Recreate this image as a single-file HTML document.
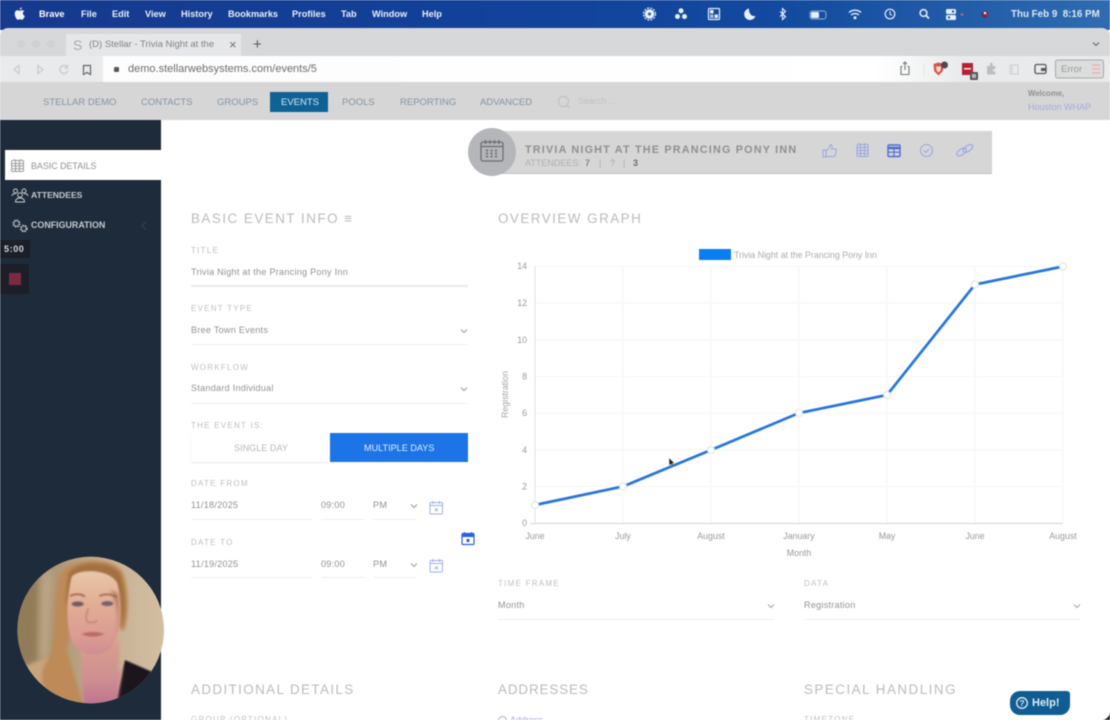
<!DOCTYPE html>
<html><head><meta charset="utf-8"><title>Stellar</title>
<style>
html,body{margin:0;padding:0;width:1110px;height:720px;overflow:hidden;background:#fff}
body{font-family:"Liberation Sans",sans-serif;position:relative}
#w{position:absolute;left:0;top:0;width:1110px;height:720px;overflow:hidden;filter:blur(.5px)}
.a{position:absolute;white-space:nowrap}
.m{top:8px;line-height:13px;font-size:9.2px;font-weight:bold;color:#eaf0fa;position:absolute;white-space:nowrap}
.n{top:96px;line-height:13px;font-size:9.5px;color:#8593a1;position:absolute;white-space:nowrap}
.h{font-size:13.4px;letter-spacing:1.5px;color:#b9bbbe;line-height:18px;position:absolute;white-space:nowrap}
.l{font-size:8px;letter-spacing:1.25px;color:#bcbec0;line-height:11px;position:absolute;white-space:nowrap}
.v{font-size:9.1px;letter-spacing:.25px;color:#8f9296;line-height:12px;position:absolute;white-space:nowrap}
.u{position:absolute;height:1px;background:#eeeff0}
.mi{position:absolute}
</style></head><body><div id="w">

<!-- menu bar -->
<div class="a" style="left:0;top:0;width:1110px;height:30px;background:linear-gradient(90deg,#163a8e 0,#12429b 45%,#124a9f 70%,#2f6cb0 100%)"></div>
<svg class="mi" style="left:14px;top:7px" width="12" height="14" viewBox="0 0 12 14"><path d="M8.200 3.200c-1.100 0-1.600.6-2.400.6s-1.300-.6-2.300-.6C2 3.200.8 4.500.8 6.700c0 2.700 1.800 6 3.200 6 .8 0 1.100-.5 2-.5s1.100.5 2 .5c1.200 0 2.300-2.200 2.800-3.700-1.200-.5-1.900-1.500-1.900-2.700 0-1.100.6-1.900 1.500-2.400-.5-.4-1.200-.7-2.200-.7zM6 3c.9-.2 1.900-1.300 1.800-2.700C6.700.5 5.700 1.600 6 3z" fill="#f0f2f8"/></svg>
<span class="m" style="left:39px;color:#fff">Brave</span>
<span class="m" style="left:81px">File</span>
<span class="m" style="left:112px">Edit</span>
<span class="m" style="left:145px">View</span>
<span class="m" style="left:181px">History</span>
<span class="m" style="left:228px">Bookmarks</span>
<span class="m" style="left:292px">Profiles</span>
<span class="m" style="left:341px">Tab</span>
<span class="m" style="left:372px">Window</span>
<span class="m" style="left:422px">Help</span>
<svg class="mi" style="left:640px;top:5px" width="350" height="18" viewBox="0 0 350 18" fill="#e8eef8">
<circle cx="9.500" cy="9" r="4.800"/><circle cx="9.500" cy="9" r="6" fill="none" stroke="#e8eef8" stroke-width="1.200" stroke-dasharray="2 1.200"/><circle cx="9.500" cy="9" r="1.500" fill="#2a5aa5"/>
<circle cx="41" cy="5.800" r="2.500"/><circle cx="37.500" cy="11.500" r="2.500"/><circle cx="44.500" cy="11.500" r="2.500"/>
<rect x="68.500" y="3.500" width="11" height="11" rx="1" fill="none" stroke="#e8eef8" stroke-width="1.200"/><rect x="70" y="5" width="3.500" height="3.500"/><rect x="74.500" y="9.500" width="3.500" height="3.500"/><rect x="70" y="9.500" width="3.500" height="3.500" opacity=".7"/>
<path d="M109 3.500a5.800 5.800 0 1 0 6.500 7.500c-3.500 1-7-2.500-6.500-7.500z"/>
<path d="M142.500 3.500l3 2.700-3 2.800 3 2.800-3 2.700zM140 6.500l5.500 5M140 11.500l5.500-5" fill="none" stroke="#e8eef8" stroke-width="1.100"/>
<rect x="170" y="6" width="16" height="8" rx="2.500" fill="none" stroke="#8fb0d8" stroke-width="1"/><rect x="171" y="7" width="8" height="6" rx="1"/>
<path d="M209 7.500a9 9 0 0 1 12 0M211.200 10a5.800 5.800 0 0 1 7.600 0" fill="none" stroke="#e8eef8" stroke-width="1.400"/><circle cx="215" cy="12.800" r="1.500"/>
<circle cx="250" cy="9" r="4.800" fill="none" stroke="#e8eef8" stroke-width="1.200"/><path d="M250 6v3.300l2 1" fill="none" stroke="#e8eef8" stroke-width="1"/>
<circle cx="283.500" cy="8" r="3.400" fill="none" stroke="#e8eef8" stroke-width="1.500"/><path d="M286 10.500l3 3" stroke="#e8eef8" stroke-width="1.700"/>
<rect x="306" y="4" width="10" height="5" rx="1.500"/><rect x="306" y="10" width="10" height="5" rx="1.500"/><circle cx="313" cy="6.500" r="1.200" fill="#2a5aa5"/><circle cx="309" cy="12.500" r="1.200" fill="#2a5aa5"/><circle cx="322" cy="9.500" r="1.300" fill="#c06a7c"/>
<circle cx="345" cy="9.500" r="3.500" fill="#6b2b55"/><circle cx="345" cy="8" r="1.300" fill="#e9eef0"/><circle cx="347" cy="10" r="1.100" fill="#b03040"/>
</svg>
<span class="a" style="left:1011px;top:8px;line-height:13px;font-size:9.8px;color:#dfe7f3;font-weight:bold">Thu Feb 9&nbsp; 8:16 PM</span>

<!-- browser chrome -->
<div class="a" style="left:0;top:28px;width:1110px;height:29px;background:#d6d8d9;border-radius:8px 8px 0 0"></div>
<div class="a" style="left:17px;top:40px;width:8px;height:8px;border-radius:50%;background:#cfd1d2;box-shadow:15px 0 0 #cfd1d2,30px 0 0 #cfd1d2"></div>
<div class="a" style="left:66px;top:34px;width:175px;height:22px;background:#e6e7e8"></div>
<span class="a" style="left:73px;top:37px;font-size:14px;color:#a8abaf;line-height:16px">S</span>
<span class="a" style="left:89px;top:39px;font-size:9.5px;color:#808488;line-height:12px">(D) Stellar - Trivia Night at the</span>
<span class="a" style="left:229px;top:38px;font-size:13px;color:#6f7276;line-height:14px">×</span>
<span class="a" style="left:253px;top:37px;font-size:15px;color:#55585c;line-height:15px">+</span>
<svg class="mi" style="left:1091px;top:41px" width="10" height="7"><path d="M2 1.500l3 3 3-3" fill="none" stroke="#77797c" stroke-width="1.300"/></svg>

<div class="a" style="left:0;top:56px;width:1110px;height:26px;background:#e9eaeb"></div>
<div class="a" style="left:103px;top:56px;width:860px;height:26px;background:linear-gradient(90deg,#fdfdfd,#fff 90%,#e9eaeb)"></div>
<svg class="mi" style="left:8px;top:61px" width="90" height="17" viewBox="0 0 90 17" fill="none" stroke="#c3c5c7" stroke-width="1.100">
<path d="M11 4.500l-5 4 5 4z"/><path d="M30 4.500l5 4-5 4z"/>
<path d="M59 6a4 4 0 1 0 .8 3.500M59.500 4v3h-3"/>
<path d="M75.500 4.500h7v9l-3.500-2-3.500 2z" stroke="#64676b" stroke-width="1.200"/></svg>
<div class="a" style="left:114px;top:67px;width:5px;height:5px;background:#55585c;border-radius:1px"></div>
<span class="a" style="left:128px;top:63px;font-size:11px;color:#6a6d70;line-height:13px">demo.stellarwebsystems.com/events/5</span>
<svg class="mi" style="left:898px;top:59px" width="212" height="21" viewBox="0 0 212 21">
<path d="M4.500 7.500h-1.500v8h8v-8h-1.500M7 11v-8M5 5l2-2 2 2" fill="none" stroke="#76797c" stroke-width="1.100"/>
<path d="M26 5v12" stroke="#e4e5e6"/>
<path d="M35.500 5l5-1.500 5 1.500-.6 7-4.400 4.500-4.400-4.500z" fill="#d9534a"/><path d="M38 7.500h5l-.6 4-1.900 2-1.900-2z" fill="#fbe3dd"/><circle cx="46.500" cy="6" r="3.500" fill="#4a4c50"/>
<rect x="64" y="4" width="11" height="12" fill="#b81f35"/><rect x="66" y="9" width="7" height="1.500" fill="#eee"/><rect x="72" y="13" width="8" height="8" rx="1" fill="#55585b"/><rect x="74" y="15" width="4" height="4" fill="#b4b6b8"/>
<path d="M89 7h3v-2a1.300 1.300 0 0 1 2.600 0v2h2.800v3h-1.500a1.300 1.300 0 0 0 0 2.500h1.500v3h-8.400z" fill="#bcbec0"/>
<rect x="112" y="6" width="8" height="9" fill="none" stroke="#c9cbcd" stroke-width="1"/><rect x="112" y="6" width="3" height="9" fill="#d8dadb"/>
<rect x="137" y="5.500" width="11" height="9" rx="1.500" fill="none" stroke="#55585c" stroke-width="1.300"/><rect x="143" y="9" width="5" height="3" fill="#55585c"/>
<rect x="157.500" y="1" width="48" height="18" rx="2" fill="#dcdddd" stroke="#a6a9ab" stroke-width="1"/>
<path d="M194 6h8M194 10h8M194 14h8" stroke="#ecb2a8" stroke-width="1.400"/></svg>
<span class="a" style="left:1061px;top:63px;font-size:9.5px;color:#96999c;line-height:13px">Error</span>

<!-- app nav -->
<div class="a" style="left:0;top:82px;width:1110px;height:38px;background:#d6d6d6"></div>
<span class="n" style="left:43px">STELLAR DEMO</span>
<span class="n" style="left:141px">CONTACTS</span>
<span class="n" style="left:217px">GROUPS</span>
<div class="a" style="left:270px;top:92px;width:58px;height:20px;background:#0f6296"></div>
<span class="n" style="left:281px;color:#d8e6f0">EVENTS</span>
<span class="n" style="left:342px">POOLS</span>
<span class="n" style="left:400px">REPORTING</span>
<span class="n" style="left:480px">ADVANCED</span>
<svg class="mi" style="left:556px;top:94px" width="16" height="16"><circle cx="7.500" cy="7.500" r="5" fill="none" stroke="#c0c2c4" stroke-width="1.200"/><path d="M11 11l3 3" stroke="#c0c2c4" stroke-width="1.200"/></svg>
<span class="a" style="left:578px;top:95px;font-size:9px;color:#c0c1c3;line-height:12px">Search ...</span>
<span class="a" style="left:1028px;top:88px;font-size:7.8px;font-weight:bold;color:#8f9092;line-height:11px">Welcome,</span>
<span class="a" style="left:1028px;top:102px;font-size:9px;color:#a6aade;line-height:11px">Houston WHAP</span>

<!-- sidebar -->
<div class="a" style="left:0;top:120px;width:161px;height:600px;background:#1e2b3a"></div>
<div class="a" style="left:5px;top:150px;width:156px;height:30px;background:#fff"></div>
<svg class="mi" style="left:10px;top:158px" width="15" height="15" viewBox="0 0 15 15" fill="none" stroke="#9a9c9f" stroke-width="1"><rect x="1.500" y="2.500" width="12" height="11" rx="1"/><path d="M1.500 5.500h12M1.500 8h12M1.500 10.800h12M5.500 2.500v11M9.500 2.500v11M4.500 1v2M10.500 1v2"/></svg>
<span class="a" style="left:31px;top:160px;font-size:8.9px;color:#8e9093;line-height:13px">BASIC DETAILS</span>
<svg class="mi" style="left:11px;top:187px" width="18" height="16" viewBox="0 0 18 16" fill="none" stroke="#c5cad0" stroke-width="1"><circle cx="4.500" cy="4" r="2"/><circle cx="13" cy="4" r="2"/><circle cx="9" cy="8" r="2.300"/><path d="M1 9c0-2 2-2.500 4-2.500M16.800 9c0-2-2-2.500-4-2.500M4.500 15c0-3 2-4 4.500-4s4.500 1 4.500 4z"/></svg>
<span class="a" style="left:31px;top:189px;font-size:8.6px;font-weight:bold;color:#c4c9cf;line-height:13px">ATTENDEES</span>
<svg class="mi" style="left:11px;top:218px" width="18" height="16" viewBox="0 0 18 16" fill="none" stroke="#c5cad0"><circle cx="5.500" cy="5.500" r="3" stroke-width="2" stroke-dasharray="1.500 .8"/><circle cx="12.800" cy="10.500" r="2.800" stroke-width="2" stroke-dasharray="1.500 .8"/></svg>
<span class="a" style="left:31px;top:219px;font-size:8.9px;font-weight:bold;color:#c4c9cf;line-height:13px">CONFIGURATION</span>
<svg class="mi" style="left:140px;top:220px" width="8" height="11"><path d="M6 1.500L2 5.500l4 4" fill="none" stroke="#33424f" stroke-width="1.200"/></svg>
<div class="a" style="left:0;top:240px;width:30px;height:18px;background:#1a1f29"></div>
<span class="a" style="left:4px;top:243px;font-size:9px;font-weight:bold;letter-spacing:.6px;color:#d5d6d8;line-height:12px">5:00</span>
<div class="a" style="left:0;top:264px;width:29px;height:30px;background:#1c1f27"></div>
<div class="a" style="left:9px;top:273px;width:12px;height:12px;background:#7c2a40"></div>

<!-- header strip -->
<div class="a" style="left:490px;top:131px;width:502px;height:43px;background:#d6d6d6;border-bottom:1px solid #bfc0c2;box-sizing:border-box"></div>
<div class="a" style="left:468px;top:128px;width:48px;height:48px;border-radius:50%;background:#b5b6b9"></div>
<svg class="mi" style="left:479px;top:138px" width="26" height="26" viewBox="0 0 26 26" fill="none" stroke="#696c70" stroke-width="1.200"><rect x="2" y="4" width="22" height="19" rx="2"/><path d="M2 8.500h22M6.500 2v4M11 2v4M15.500 2v4M20 2v4"/><path d="M7 12.500h12M7 15.500h12M7 18.500h12" stroke-width="1.800" stroke-dasharray="2 2.500"/></svg>
<span class="a" style="left:525px;top:143px;font-size:10.8px;font-weight:bold;letter-spacing:1.2px;color:#8e9094;line-height:14px">TRIVIA NIGHT AT THE PRANCING PONY INN</span>
<span class="a" style="left:525px;top:157px;font-size:9px;color:#aeb0b3;line-height:12px">ATTENDEES:</span>
<span class="a" style="left:585px;top:157px;font-size:9px;color:#85888b;line-height:12px;font-weight:bold">7</span>
<span class="a" style="left:599px;top:157px;font-size:9px;color:#a8aaad;line-height:12px">|</span>
<span class="a" style="left:610px;top:157px;font-size:9px;color:#a0a3a6;line-height:12px">?</span>
<span class="a" style="left:623px;top:157px;font-size:9px;color:#a8aaad;line-height:12px">|</span>
<span class="a" style="left:633px;top:157px;font-size:9px;color:#6b6e72;line-height:12px;font-weight:bold">3</span>
<svg class="mi" style="left:820px;top:141px" width="160" height="20" viewBox="0 0 160 20" fill="none" stroke="#98a6e2" stroke-width="1">
<path d="M3 9h3v7H3zM6.500 9.500c2-1 3-3 4-6 1.500 0 2 1.500 1.200 4.500h3.800c1 0 1 1 .7 2l-1.200 4.500c-.2.800-.8 1-1.500 1H6.500"/>
<rect x="37" y="3.500" width="11" height="12" rx="1"/><path d="M37 6.500h11M37 9.500h11M37 12.500h11M40.500 3.500v12M44.500 3.500v12M39.500 2v2M45.500 2v2"/>
<rect x="68" y="4" width="12" height="11.500" rx="1" stroke="#4a6ed8" stroke-width="1.400"/><path d="M68 7h12" stroke="#4a6ed8" stroke-width="2.500"/><path d="M68 11.200h12M74 7v8.500" stroke="#4a6ed8" stroke-width="1.100"/>
<circle cx="106.500" cy="9.500" r="6"/><path d="M103.800 9.500l2 2 3.500-3.500"/>
<g stroke-width="1.100"><ellipse cx="141.500" cy="11" rx="5.500" ry="2.800" transform="rotate(-35 141.500 11)"/><ellipse cx="148" cy="7.500" rx="5.500" ry="2.800" transform="rotate(-35 148 7.500)"/></g>
</svg>

<!-- basic event info -->
<span class="h" style="left:191px;top:210px">BASIC EVENT INFO ≡</span>
<span class="l" style="left:191px;top:245px">TITLE</span>
<span class="v" style="left:191px;top:266px">Trivia Night at the Prancing Pony Inn</span>
<div class="u" style="left:191px;top:285px;width:277px;height:2px;background:#e8e9ea"></div>
<span class="l" style="left:191px;top:303px">EVENT TYPE</span>
<span class="v" style="left:191px;top:324px">Bree Town Events</span>
<svg class="mi" style="left:460px;top:328px" width="8" height="6"><path d="M1 1.500l3 3 3-3" fill="none" stroke="#9a9da0" stroke-width="1"/></svg>
<div class="u" style="left:191px;top:344px;width:277px"></div>
<span class="l" style="left:191px;top:362px">WORKFLOW</span>
<span class="v" style="left:191px;top:382px">Standard Individual</span>
<svg class="mi" style="left:460px;top:386px" width="8" height="6"><path d="M1 1.500l3 3 3-3" fill="none" stroke="#9a9da0" stroke-width="1"/></svg>
<div class="u" style="left:191px;top:403px;width:277px"></div>
<span class="l" style="left:191px;top:420px">THE EVENT IS:</span>
<div class="a" style="left:191px;top:433px;width:138px;height:29px;background:#fff;box-shadow:0 1px 2px #ececec"></div>
<span class="a" style="left:234px;top:442px;font-size:9.1px;color:#b5b8ba;line-height:12px">SINGLE DAY</span>
<div class="a" style="left:330px;top:433px;width:138px;height:29px;background:#1c74e6"></div>
<span class="a" style="left:364px;top:442px;font-size:9.1px;color:#dfeafa;line-height:12px">MULTIPLE DAYS</span>
<span class="l" style="left:191px;top:478px">DATE FROM</span>
<span class="v" style="left:191px;top:499px">11/18/2025</span>
<span class="v" style="left:321px;top:499px">09:00</span>
<span class="v" style="left:373px;top:499px">PM</span>
<svg class="mi" style="left:410px;top:503px" width="8" height="6"><path d="M1 1.500l3 3 3-3" fill="none" stroke="#9a9da0" stroke-width="1"/></svg>
<div class="u" style="left:191px;top:519px;width:122px"></div><div class="u" style="left:321px;top:519px;width:44px"></div><div class="u" style="left:373px;top:519px;width:44px"></div>
<svg class="mi" style="left:429px;top:500px" width="15" height="15" viewBox="0 0 15 15" fill="none" stroke="#9db0ea" stroke-width="1"><rect x="1" y="2.500" width="12.500" height="11.500" rx="1"/><path d="M1 5.500h12.500M4 1v3M10.500 1v3M5.800 8.300l3 3M8.800 8.300l-3 3"/></svg>
<span class="l" style="left:191px;top:537px">DATE TO</span>
<svg class="mi" style="left:461px;top:531px" width="14" height="15" viewBox="0 0 14 15"><rect x="1" y="2.500" width="12" height="11" rx="1" fill="none" stroke="#2a62d8" stroke-width="1.200"/><path d="M1 3h12v3H1z" fill="#2a62d8"/><path d="M3.500 1v2M10.500 1v2" stroke="#2a62d8"/><rect x="5.500" y="8" width="3" height="3" fill="#2a62d8"/></svg>
<span class="v" style="left:191px;top:558px">11/19/2025</span>
<span class="v" style="left:321px;top:558px">09:00</span>
<span class="v" style="left:373px;top:558px">PM</span>
<svg class="mi" style="left:410px;top:562px" width="8" height="6"><path d="M1 1.500l3 3 3-3" fill="none" stroke="#9a9da0" stroke-width="1"/></svg>
<div class="u" style="left:191px;top:577px;width:122px"></div><div class="u" style="left:321px;top:577px;width:44px"></div><div class="u" style="left:373px;top:577px;width:44px"></div>
<svg class="mi" style="left:429px;top:558px" width="15" height="15" viewBox="0 0 15 15" fill="none" stroke="#9db0ea" stroke-width="1"><rect x="1" y="2.500" width="12.500" height="11.500" rx="1"/><path d="M1 5.500h12.500M4 1v3M10.500 1v3M5.800 8.300l3 3M8.800 8.300l-3 3"/></svg>

<!-- graph -->
<span class="h" style="left:498px;top:210px">OVERVIEW GRAPH</span>
<svg class="mi" style="left:490px;top:245px" width="620" height="320" viewBox="490 245 620 320" font-family="Liberation Sans, sans-serif">
<rect x="699" y="249" width="32" height="11" fill="#0a7df0"/>
<text x="734" y="258" font-size="8.800" fill="#a9abae">Trivia Night at the Prancing Pony Inn</text>
<g stroke="#f5f6f7" stroke-width="1"><path d="M535 266.500H1063M535 303H1063M535 340H1063M535 376.500H1063M535 413H1063M535 450H1063M535 486.500H1063"/><path d="M623 266V523M711 266V523M799 266V523M887 266V523M975 266V523M1063 266V523"/></g>
<path d="M535 266V523" stroke="#e2e3e4"/><path d="M530 523.500H1063" stroke="#d4d5d6"/>
<g font-size="8.800" fill="#97999c" text-anchor="end"><text x="527" y="269">14</text><text x="527" y="306">12</text><text x="527" y="343">10</text><text x="527" y="379.500">8</text><text x="527" y="416">6</text><text x="527" y="453">4</text><text x="527" y="489.500">2</text><text x="527" y="526">0</text></g>
<g font-size="8.800" fill="#97999c" text-anchor="middle"><text x="535" y="539">June</text><text x="623" y="539">July</text><text x="711" y="539">August</text><text x="799" y="539">January</text><text x="887" y="539">May</text><text x="975" y="539">June</text><text x="1063" y="539">August</text><text x="799" y="556">Month</text></g>
<text transform="translate(508 394.500) rotate(-90)" font-size="8.800" fill="#a2a4a7" text-anchor="middle">Registration</text>
<polyline points="535,505 623,486.500 711,450 799,413 887,395 975,284.500 1063,266.500" fill="none" stroke="#2775dc" stroke-width="2.700"/>
<g fill="#fff" stroke="#dfe2e5" stroke-width="1"><circle cx="535" cy="505" r="3.500"/><circle cx="623" cy="486.500" r="3.500"/><circle cx="711" cy="450" r="3.500"/><circle cx="799" cy="413" r="3.500"/><circle cx="887" cy="395" r="3.500"/><circle cx="975" cy="284.500" r="3.500"/><circle cx="1063" cy="266.500" r="3.500"/></g>
<path d="M669 458l.3 7.500 1.700-1.600 1.600 3 1-.5-1.500-3 2.200-.3z" fill="#222" stroke="#ddd" stroke-width=".3"/>
</svg>
<span class="l" style="left:498px;top:578px">TIME FRAME</span>
<span class="v" style="left:498px;top:599px">Month</span>
<svg class="mi" style="left:767px;top:603px" width="8" height="6"><path d="M1 1.500l3 3 3-3" fill="none" stroke="#a2a5a8" stroke-width="1"/></svg>
<div class="u" style="left:498px;top:619px;width:277px"></div>
<span class="l" style="left:804px;top:578px">DATA</span>
<span class="v" style="left:804px;top:599px">Registration</span>
<svg class="mi" style="left:1073px;top:603px" width="8" height="6"><path d="M1 1.500l3 3 3-3" fill="none" stroke="#a2a5a8" stroke-width="1"/></svg>
<div class="u" style="left:804px;top:619px;width:277px"></div>

<!-- lower headings -->
<span class="h" style="left:191px;top:681px;letter-spacing:1.400px">ADDITIONAL DETAILS</span>
<span class="h" style="left:498px;top:681px;letter-spacing:.9px">ADDRESSES</span>
<span class="h" style="left:804px;top:681px">SPECIAL HANDLING</span>
<span class="l" style="left:191px;top:714px">GROUP (OPTIONAL)</span>
<span class="a" style="left:510px;top:714px;font-size:9px;color:#a6aade;line-height:12px">Address</span>
<div class="a" style="left:498px;top:716px;width:7px;height:7px;border:1px solid #a6aade;border-radius:50%"></div>
<span class="l" style="left:804px;top:714px">TIMEZONE</span>

<!-- help -->
<div class="a" style="left:1010px;top:691px;width:60px;height:24px;background:#0f5d92;border-radius:10px 3px 10px 10px"></div>
<svg class="mi" style="left:1015px;top:696px" width="14" height="14"><circle cx="7" cy="7" r="5.300" fill="none" stroke="#dfe9f2" stroke-width="1.300"/><text x="7" y="10" font-size="8.500" font-weight="bold" fill="#dfe9f2" text-anchor="middle" font-family="Liberation Sans">?</text></svg>
<span class="a" style="left:1032px;top:696px;font-size:11px;font-weight:bold;color:#e2ebf3;line-height:14px">Help!</span>
<svg class="mi" style="left:1102px;top:712px" width="8" height="8"><path d="M8 0v8H0c4 0 8-4 8-8z" fill="#222"/></svg>

<!-- webcam -->
<svg class="mi" style="left:10px;top:550px" width="160" height="160" viewBox="0 0 480 480">
<defs>
<clipPath id="c"><circle cx="242" cy="240" r="220"/></clipPath>
<filter id="b1" x="-30%" y="-30%" width="160%" height="160%"><feGaussianBlur stdDeviation="12"/></filter>
<filter id="b2" x="-30%" y="-30%" width="160%" height="160%"><feGaussianBlur stdDeviation="5"/></filter>
<filter id="b3" x="-30%" y="-30%" width="160%" height="160%"><feGaussianBlur stdDeviation="2.500"/></filter>
<linearGradient id="bg" x1="0" x2="1" y1="0" y2="0"><stop offset="0" stop-color="#8c7755"/><stop offset=".22" stop-color="#a8926f"/><stop offset=".65" stop-color="#c8b295"/><stop offset="1" stop-color="#d6c0a4"/></linearGradient>
<linearGradient id="fc" x1="0" x2="0" y1="0" y2="1"><stop offset="0" stop-color="#e9c6a8"/><stop offset=".4" stop-color="#e2ad95"/><stop offset=".8" stop-color="#da9a92"/><stop offset="1" stop-color="#d08c92"/></linearGradient>
<linearGradient id="nk" x1="0" x2="0" y1="0" y2="1"><stop offset="0" stop-color="#d8a08c"/><stop offset=".55" stop-color="#cf8f92"/><stop offset="1" stop-color="#bb6f8c"/></linearGradient>
</defs>
<g clip-path="url(#c)">
<rect x="0" y="0" width="480" height="480" fill="url(#bg)"/>
<path d="M20 80L85 60L80 330L20 360z" fill="#927c59" filter="url(#b1)"/>
<path d="M95 70L125 60L115 330L90 330z" fill="#bda788" filter="url(#b1)"/>
<path d="M40 350L120 320L130 480L80 480z" fill="#c9a57c" filter="url(#b2)"/>
<path d="M345 330L425 365L395 430L315 470z" fill="#1e161c" filter="url(#b3)"/>
<path d="M150 70C180 25 310 15 340 70C358 130 358 200 340 245L300 200L210 120L170 300L225 480L125 480C110 420 70 380 120 320C140 260 125 150 150 70z" fill="#bd8a58" filter="url(#b2)"/>
<path d="M175 70C205 30 300 30 330 70C348 120 350 180 338 235L325 120L215 70L165 170z" fill="#a3703f" filter="url(#b2)"/>
<path d="M212 280L330 270L325 370L338 350L318 480L222 480L215 380z" fill="url(#nk)" filter="url(#b2)"/>
<path d="M185 80C205 55 300 55 322 100C338 165 335 255 300 295C270 322 222 318 195 290C165 250 168 150 185 80z" fill="url(#fc)" filter="url(#b3)"/>
<path d="M300 120C330 170 330 250 296 296C316 270 335 220 325 130z" fill="#b97e68" filter="url(#b2)"/>
<path d="M180 138Q205 126 225 140M268 138Q295 126 320 142" fill="none" stroke="#96614a" stroke-width="5" filter="url(#b3)"/>
<ellipse cx="203" cy="162" rx="18" ry="7.500" fill="#6e5a60" filter="url(#b3)"/><ellipse cx="292" cy="161" rx="18" ry="7.500" fill="#75606a" filter="url(#b3)"/>
<path d="M235 175Q224 205 232 215Q248 222 262 212" fill="none" stroke="#c98a7c" stroke-width="6" filter="url(#b3)"/>
<path d="M214 252Q248 240 284 252Q250 268 214 252z" fill="#b86a68" filter="url(#b3)"/>
</g>
</svg>
</div></body></html>
